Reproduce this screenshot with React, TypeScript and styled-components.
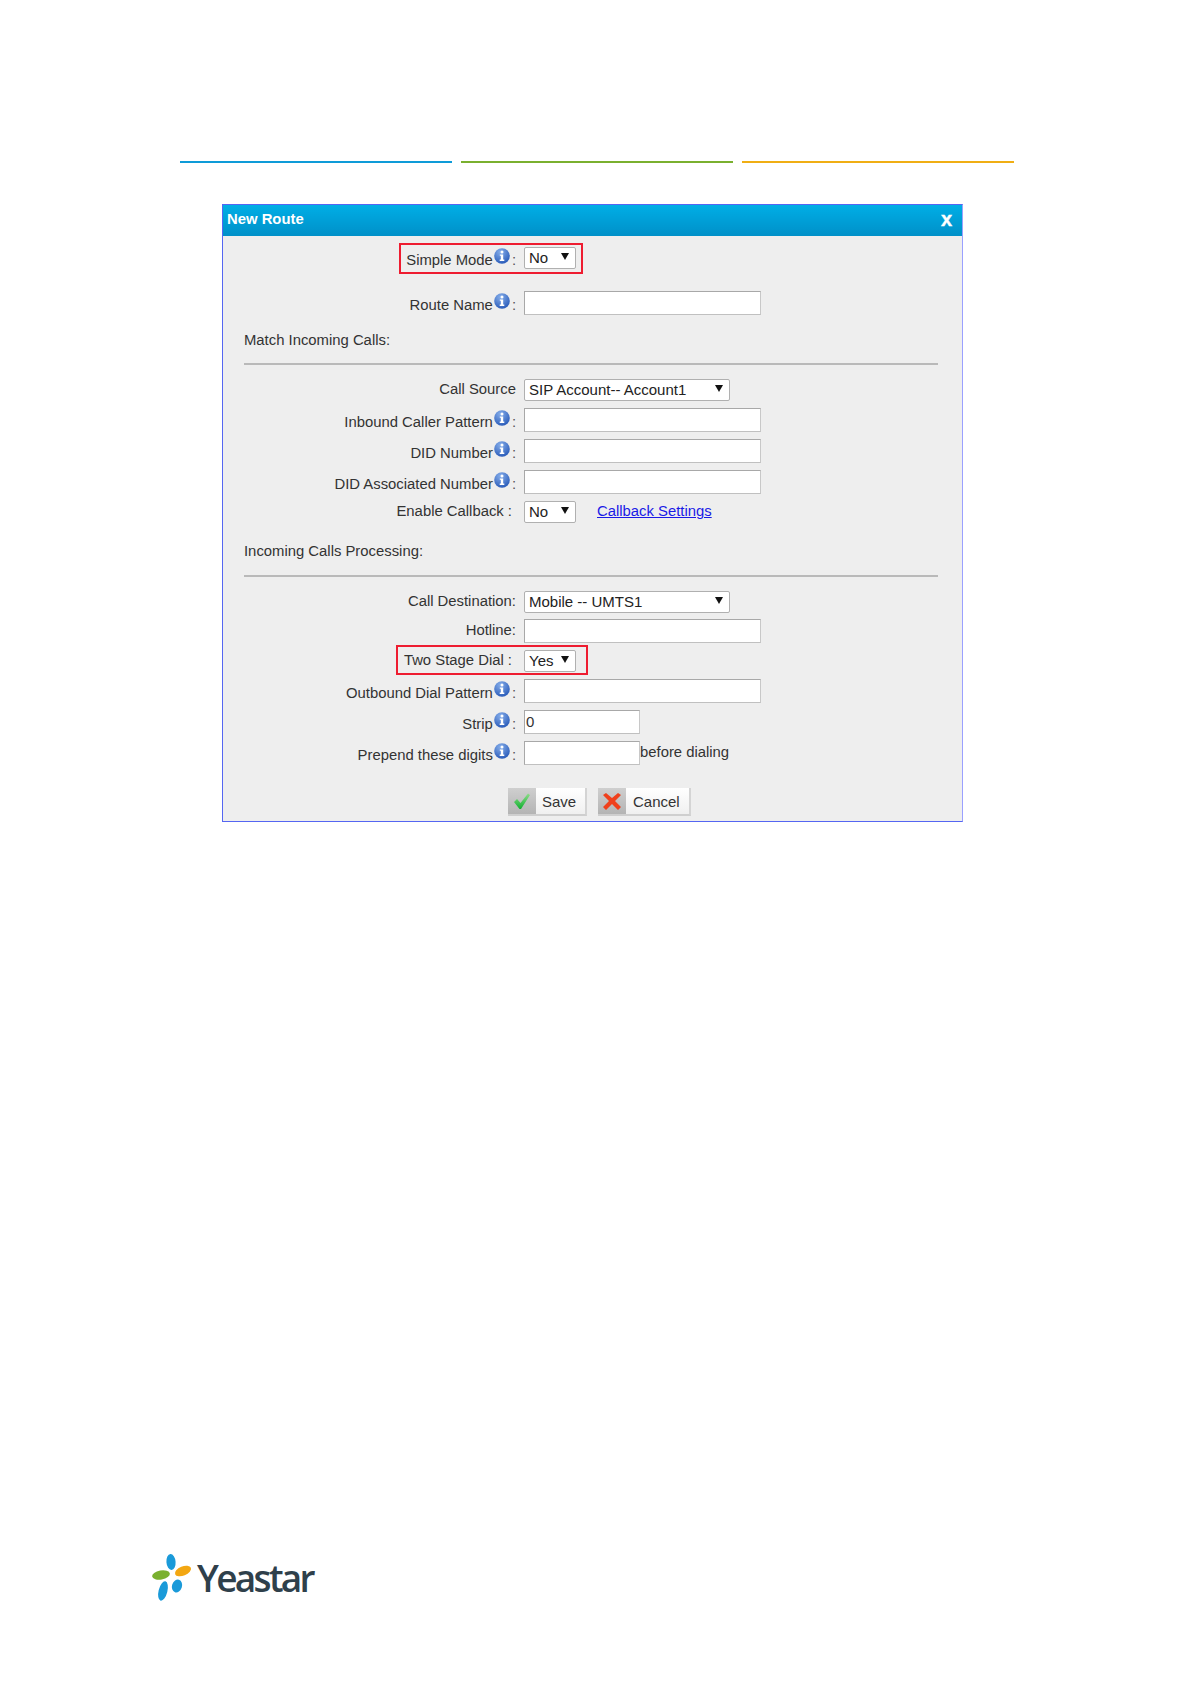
import React from "react";
import styled, { createGlobalStyle } from "styled-components";

const Global = createGlobalStyle`
  html, body { margin: 0; padding: 0; background: #fff; }
  body { font-family: "Liberation Sans", Arial, sans-serif; }
`;

const Page = styled.div`
  width: 1191px;
  height: 1684px;
  overflow: hidden;
  display: flex;
  flex-direction: column;
  padding-top: 161px;
  box-sizing: border-box;
`;

const Rules = styled.div`
  display: flex;
  gap: 9px;
  margin-left: 180px;
  width: 834px;
`;

const Rule = styled.div<{ $color: string }>`
  flex: 1;
  height: 2px;
  background: ${(p) => p.$color};
`;

const Dialog = styled.section`
  width: 741px;
  margin: 41px 0 0 222px;
  box-sizing: border-box;
  background: #eeeeee;
  border: 1px solid #5566f2;
  border-right-color: #9aa0ff;
  color: #333;
  font-size: 14.85px;
`;

const TitleBar = styled.header`
  height: 31px;
  padding: 0 10px 3px 4px;
  box-sizing: border-box;
  display: flex;
  align-items: center;
  justify-content: space-between;
  color: #fff;
  font-weight: bold;
  background: linear-gradient(#00aee6, #0090c8);
`;

const Close = styled.span`
  font-size: 20px;
  line-height: 1;
  margin-top: -1px;
  -webkit-text-stroke: 0.4px #fff;
`;

const Body = styled.div`
  padding-bottom: 5px;
`;

const Row = styled.div<{ $gap: number }>`
  position: relative;
  display: flex;
  align-items: center;
  height: 24px;
  margin-top: ${(p) => p.$gap}px;
`;

const Label = styled.div<{ $plain?: boolean }>`
  width: 293px;
  flex: none;
  display: flex;
  justify-content: flex-end;
  align-items: center;
  white-space: nowrap;
  padding: 0 ${(p) => (p.$plain ? 4 : 0)}px 2px 0;
  box-sizing: border-box;
`;

const InfoLabelBox = styled(Label)`
  padding-bottom: 0;
`;

const LabelText = styled.span`
  position: relative;
  top: 2px;
`;

const Colon = styled.span`
  position: relative;
  top: 2px;
  margin-left: 2px;
  color: #555;
`;

const Info = styled.svg`
  width: 16px;
  height: 16px;
  flex: none;
  margin: -4px 0 0 1px;
`;

const Field = styled.input<{ $w: number }>`
  display: block;
  width: ${(p) => p.$w}px;
  height: 24px;
  margin: 0 0 0 8px;
  padding: 0 0 2px 1px;
  box-sizing: border-box;
  border: 1px solid #a8a8a8;
  border-right-color: #c8c8c8;
  border-bottom-color: #c0c0c0;
  outline: none;
  background: #fff;
  color: #333;
  font: 15px "Liberation Sans", Arial, sans-serif;
`;

const Select = styled.div<{ $w: number }>`
  width: ${(p) => p.$w}px;
  height: 22px;
  margin-left: 8px;
  padding: 0 6px 1px 4px;
  box-sizing: border-box;
  display: flex;
  align-items: center;
  justify-content: space-between;
  background: #fff;
  border: 1px solid #b0b0b0;
  border-radius: 2px;
  color: #222;
  font-size: 15px;
`;

const Caret = styled.svg`
  width: 8px;
  height: 7px;
  flex: none;
  margin-top: -2px;
`;

const SettingsLink = styled.a`
  margin: 0 0 2px 21px;
  color: #1a1ae6;
  text-decoration: underline;
`;

const After = styled.span`
  color: #333;
  position: relative;
  top: -1px;
`;

const Heading = styled.div<{ $gap: number }>`
  height: 20px;
  line-height: 20px;
  margin: ${(p) => p.$gap}px 0 0 21px;
`;

const Divider = styled.hr<{ $gap: number }>`
  height: 2px;
  border: 0;
  background: #b9b9b9;
  margin: ${(p) => p.$gap}px 24px 0 21px;
`;

const RedBox = styled.div<{ $left: number; $w: number; $top: number; $h: number }>`
  position: absolute;
  left: ${(p) => p.$left}px;
  top: ${(p) => p.$top}px;
  width: ${(p) => p.$w}px;
  height: ${(p) => p.$h}px;
  box-sizing: border-box;
  border: 2px solid #ee1c30;
  pointer-events: none;
`;

const Actions = styled.div`
  display: flex;
  gap: 11px;
  margin: 23px 0 0 285px;
`;

const Button = styled.button<{ $w: number }>`
  width: ${(p) => p.$w}px;
  height: 28px;
  padding: 0;
  display: flex;
  align-items: stretch;
  border: 0;
  border-right: 2px solid #d4d4d4;
  border-bottom: 2px solid #cfcfcf;
  background: linear-gradient(#ffffff, #f0f0f0);
  color: #333;
  font: 15px "Liberation Sans", Arial, sans-serif;
`;

const ButtonIcon = styled.span`
  width: 28px;
  flex: none;
  display: flex;
  align-items: center;
  justify-content: center;
  background: linear-gradient(#cfcfcf, #b4b4b4);
`;

const ButtonText = styled.span<{ $pad: number }>`
  padding-left: ${(p) => p.$pad}px;
  line-height: 28px;
`;

const Footer = styled.footer`
  margin-top: 729px;
  margin-left: 150px;
  display: flex;
  align-items: center;
  height: 52px;
`;

const LogoMark = styled.svg`
  width: 44px;
  height: 52px;
  flex: none;
`;

const LogoText = styled.span`
  margin-left: 3px;
  font-family: "Open Sans", sans-serif;
  font-weight: 600;
  font-size: 37px;
  letter-spacing: -2.7px;
  color: #2f404b;
  line-height: 1;
`;

const InfoIcon = () => (
  <Info viewBox="0 0 16 16">
    <defs>
      <radialGradient id="ig" cx="40%" cy="25%" r="85%">
        <stop offset="0" stopColor="#86aeea" />
        <stop offset="1" stopColor="#1f52b4" />
      </radialGradient>
    </defs>
    <circle cx="8" cy="8" r="7.8" fill="url(#ig)" />
    <circle cx="8" cy="4" r="1.5" fill="#fff" />
    <path d="M5.8 6.4h3.4v5.2h1.1v1.4H5.7v-1.4h1.1V7.8h-1z" fill="#fff" />
  </Info>
);

const DownCaret = () => (
  <Caret viewBox="0 0 8 7">
    <path d="M0 0h8L4 7z" fill="#111" />
  </Caret>
);

const InfoLabel = ({ text }: { text: string }) => (
  <InfoLabelBox>
    <LabelText>{text}</LabelText>
    <InfoIcon />
    <Colon>:</Colon>
  </InfoLabelBox>
);

const App = () => (
  <Page>
    <Global />
    <Rules>
      <Rule $color="#0e9bd8" />
      <Rule $color="#7ab02f" />
      <Rule $color="#f0ae14" />
    </Rules>
    <Dialog>
      <TitleBar>
        <span>New Route</span>
        <Close>x</Close>
      </TitleBar>
      <Body>
        <Row $gap={10}>
          <RedBox $left={176} $w={184} $top={-3} $h={31} />
          <InfoLabel text="Simple Mode" />
          <Select $w={52}>
            No
            <DownCaret />
          </Select>
        </Row>
        <Row $gap={21}>
          <InfoLabel text="Route Name" />
          <Field $w={237} />
        </Row>
        <Heading $gap={15}>Match Incoming Calls:</Heading>
        <Divider $gap={13} />
        <Row $gap={13}>
          <Label>Call Source</Label>
          <Select $w={206}>
            SIP Account-- Account1
            <DownCaret />
          </Select>
        </Row>
        <Row $gap={6}>
          <InfoLabel text="Inbound Caller Pattern" />
          <Field $w={237} />
        </Row>
        <Row $gap={7}>
          <InfoLabel text="DID Number" />
          <Field $w={237} />
        </Row>
        <Row $gap={7}>
          <InfoLabel text="DID Associated Number" />
          <Field $w={237} />
        </Row>
        <Row $gap={6}>
          <Label $plain>Enable Callback :</Label>
          <Select $w={52}>
            No
            <DownCaret />
          </Select>
          <SettingsLink href="#">Callback Settings</SettingsLink>
        </Row>
        <Heading $gap={17}>Incoming Calls Processing:</Heading>
        <Divider $gap={14} />
        <Row $gap={13}>
          <Label>Call Destination:</Label>
          <Select $w={206}>
            Mobile -- UMTS1
            <DownCaret />
          </Select>
        </Row>
        <Row $gap={5}>
          <Label>Hotline:</Label>
          <Field $w={237} />
        </Row>
        <Row $gap={6}>
          <RedBox $left={173} $w={192} $top={-4} $h={30} />
          <Label $plain>Two Stage Dial :</Label>
          <Select $w={52}>
            Yes
            <DownCaret />
          </Select>
        </Row>
        <Row $gap={6}>
          <InfoLabel text="Outbound Dial Pattern" />
          <Field $w={237} />
        </Row>
        <Row $gap={7}>
          <InfoLabel text="Strip" />
          <Field $w={116} defaultValue="0" />
        </Row>
        <Row $gap={7}>
          <InfoLabel text="Prepend these digits" />
          <Field $w={116} />
          <After>before dialing</After>
        </Row>
        <Actions>
          <Button $w={79}>
            <ButtonIcon>
              <svg width="18" height="18" viewBox="0 0 18 18">
                <defs>
                  <linearGradient id="chk" x1="0" y1="0" x2="0" y2="1">
                    <stop offset="0" stopColor="#8fdc8a" />
                    <stop offset="1" stopColor="#10b030" />
                  </linearGradient>
                </defs>
                <path d="M1 10l3-3 3.5 4L15 1.5l2 1.5L8 17h-1.5z" fill="url(#chk)" />
              </svg>
            </ButtonIcon>
            <ButtonText $pad={6}>Save</ButtonText>
          </Button>
          <Button $w={93}>
            <ButtonIcon>
              <svg width="20" height="18" viewBox="0 0 20 18">
                <path d="M1 3l3-2 6 5 6-5 3 2-6 6 6 6-3 3-6-6-6 6-3-3 6-6z" fill="#f0401c" />
              </svg>
            </ButtonIcon>
            <ButtonText $pad={7}>Cancel</ButtonText>
          </Button>
        </Actions>
      </Body>
    </Dialog>
    <Footer>
      <LogoMark viewBox="0 0 44 52">
        <ellipse cx="21" cy="11" rx="4.6" ry="8" fill="#1a9ad9" transform="rotate(-4 21 11)" />
        <ellipse cx="33" cy="20" rx="8.5" ry="4.6" fill="#f3a712" transform="rotate(-22 33 20)" />
        <ellipse cx="11" cy="24" rx="9" ry="4.6" fill="#7ab02f" transform="rotate(-10 11 24)" />
        <ellipse cx="13" cy="40" rx="4.4" ry="10" fill="#1a9ad9" transform="rotate(14 13 40)" />
        <ellipse cx="27" cy="35" rx="5" ry="6.5" fill="#1a9ad9" transform="rotate(18 27 35)" />
      </LogoMark>
      <LogoText>Yeastar</LogoText>
    </Footer>
  </Page>
);

export default App;
